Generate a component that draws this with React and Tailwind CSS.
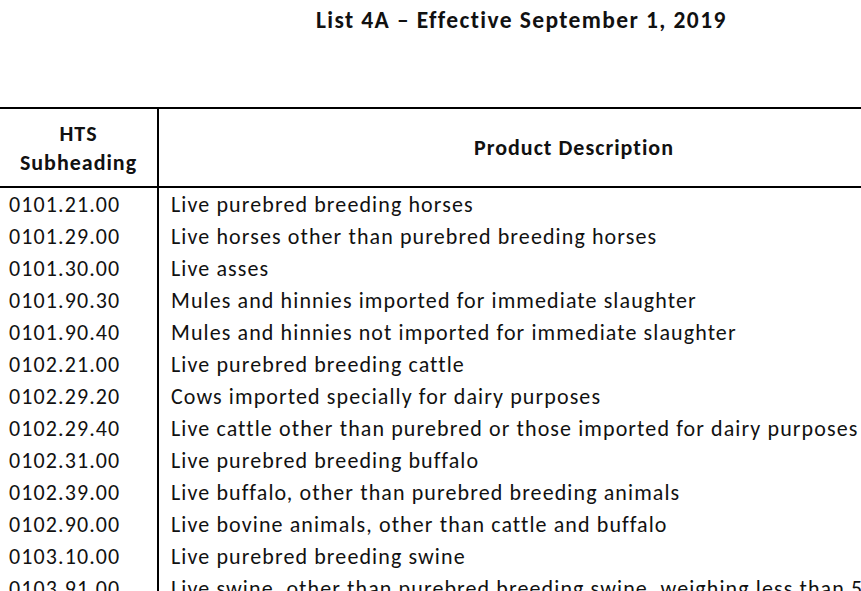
const rows = [
  ["0101.21.00", "Live purebred breeding horses"],
  ["0101.29.00", "Live horses other than purebred breeding horses"],
  ["0101.30.00", "Live asses"],
  ["0101.90.30", "Mules and hinnies imported for immediate slaughter"],
  ["0101.90.40", "Mules and hinnies not imported for immediate slaughter"],
  ["0102.21.00", "Live purebred breeding cattle"],
  ["0102.29.20", "Cows imported specially for dairy purposes"],
  ["0102.29.40", "Live cattle other than purebred or those imported for dairy purposes"],
  ["0102.31.00", "Live purebred breeding buffalo"],
  ["0102.39.00", "Live buffalo, other than purebred breeding animals"],
  ["0102.90.00", "Live bovine animals, other than cattle and buffalo"],
  ["0103.10.00", "Live purebred breeding swine"],
  ["0103.91.00", "Live swine, other than purebred breeding swine, weighing less than 50 kg each"],
];

export default function App() {
  return (
    <div
      className="w-[861px] h-[591px] overflow-hidden bg-white text-[#111]"
      style={{ fontFamily: "Carlito, 'Open Sans', Lato, sans-serif" }}
    >
      <div className="h-[107px] pl-[316px] pt-[5px]">
        <h1 className="text-[23.5px] font-bold leading-[30px] tracking-[1.4px] whitespace-nowrap">
          List 4A – Effective September 1, 2019
        </h1>
      </div>

      <div className="w-[1000px] border-t-2 border-black">
        <div className="flex border-b-2 border-black font-bold text-[22px] tracking-[1px]">
          <div className="w-[159px] shrink-0 h-[77px] border-r-2 border-black flex flex-col items-center justify-center leading-[29px]">
            <span>HTS</span>
            <span>Subheading</span>
          </div>
          <div className="w-[830px] h-[77px] flex items-center justify-center">
            Product Description
          </div>
        </div>

        {rows.map(([code, desc]) => (
          <div key={code} className="flex h-[32px] items-center text-[22px] tracking-[1.1px]">
            <div className="w-[159px] shrink-0 h-full border-r-2 border-black pl-[9px] flex items-center">
              {code}
            </div>
            <div className="pl-[12px] whitespace-nowrap">{desc}</div>
          </div>
        ))}
      </div>
    </div>
  );
}
